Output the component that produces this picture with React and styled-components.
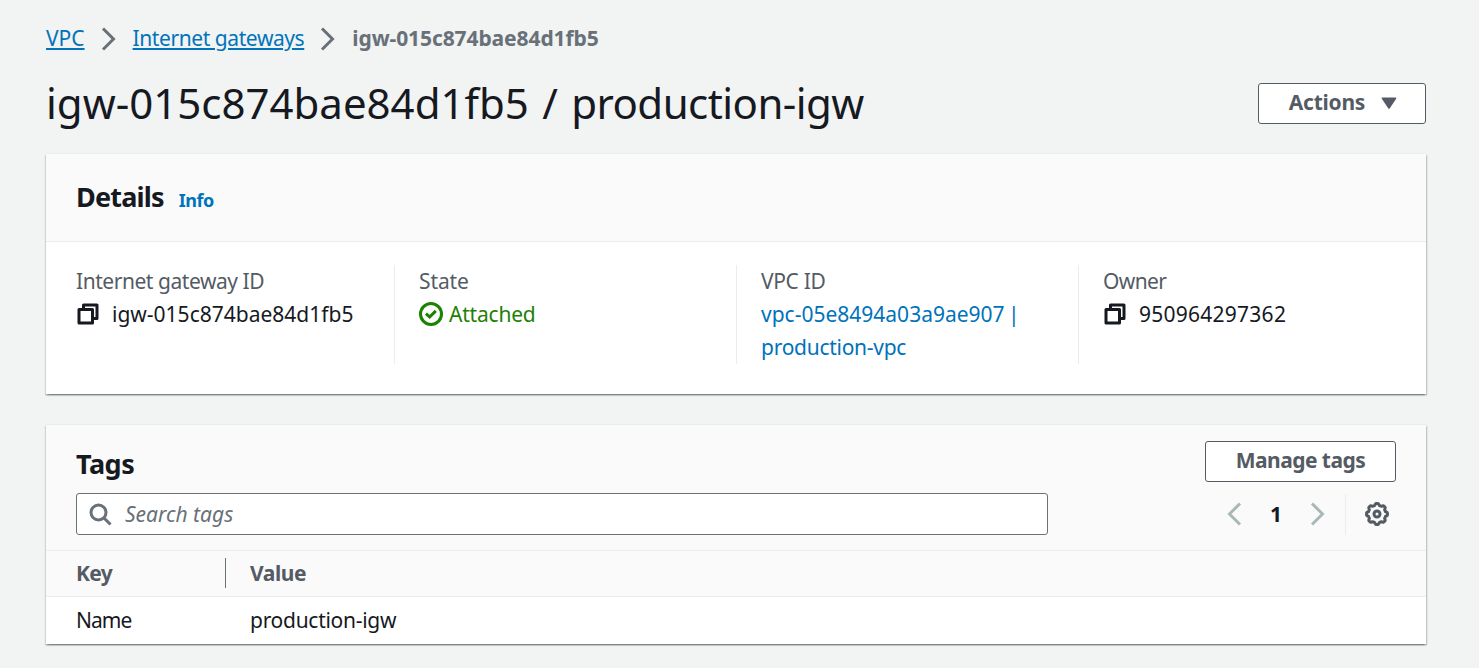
import React from "react";
import styled, { createGlobalStyle } from "styled-components";

const GlobalStyle = createGlobalStyle`
  * { box-sizing: border-box; }
  body {
    margin: 0;
    background: #f2f3f3;
    color: #16191f;
    font-family: "Noto Sans", "Open Sans", sans-serif;
    font-size: 21px;
    line-height: 33px;
  }
`;

const Page = styled.main`
  min-height: 668px;
  padding: 22px 53px 23px 46px;
`;

const Breadcrumbs = styled.nav`
  display: flex;
  align-items: center;
  height: 33px;
`;

const Crumb = styled.a`
  color: #0073bb;
  text-decoration: underline;
  text-decoration-thickness: 2px;
  text-underline-offset: 2px;
  letter-spacing: ${(p) => p.$track || 0}px;
  white-space: nowrap;
`;

const CurrentCrumb = styled.span`
  color: #687078;
  font-weight: 700;
  white-space: nowrap;
  letter-spacing: -0.09px;
`;

const CrumbSeparator = styled.span`
  display: flex;
  margin: 0 12px;
`;

const TitleRow = styled.header`
  display: flex;
  align-items: center;
  justify-content: space-between;
  height: 41px;
  margin: 28px 0 29px;
`;

const PageTitle = styled.h1`
  margin: 0 0 2px;
  font-size: 42px;
  font-weight: 400;
  line-height: 41px;
  word-spacing: 2.5px;
  white-space: nowrap;
`;

const ResourceName = styled.span`
  letter-spacing: -0.55px;
`;

const Button = styled.button`
  display: flex;
  align-items: center;
  justify-content: center;
  gap: 16px;
  width: ${(p) => p.$width}px;
  height: 41px;
  padding: 0 0 2px ${(p) => p.$shift || 0}px;
  border: 1px solid #545b64;
  border-radius: 3px;
  background: #fff;
  color: #545b64;
  font: 700 21px/33px "Noto Sans", "Open Sans", sans-serif;
  letter-spacing: ${(p) => p.$track || 0}px;
`;

const Panel = styled.section`
  background: #fff;
  border-top: 1px solid #eaeded;
  box-shadow:
    0 1.5px 1.5px 0 rgba(0, 28, 36, 0.3),
    1.5px 1.5px 1.5px 0 rgba(0, 28, 36, 0.15),
    -1.5px 1.5px 1.5px 0 rgba(0, 28, 36, 0.15);
  & + & { margin-top: 30px; }
`;

const DetailsHeader = styled.div`
  display: flex;
  align-items: baseline;
  gap: 15px;
  height: 88px;
  padding: 26px 30px 0;
  background: #fafafa;
  border-bottom: 1px solid #eaeded;
`;

const PanelTitle = styled.h2`
  margin: 0;
  font-size: 27px;
  font-weight: 700;
  line-height: 33px;
  letter-spacing: -0.8px;
`;

const InfoLink = styled.a`
  color: #0073bb;
  font-size: 18px;
  font-weight: 700;
  letter-spacing: -0.5px;
`;

const DetailsGrid = styled.div`
  display: grid;
  grid-template-columns: 318px 342px 342px 1fr;
  padding: 23px 30px 30px;
`;

const Field = styled.div`
  min-height: 99px;
  border-left: ${(p) => (p.$first ? "none" : "1px solid #eaeded")};
  padding-left: ${(p) => (p.$first ? 0 : 24)}px;
`;

const FieldLabel = styled.div`
  color: #545b64;
  letter-spacing: ${(p) => p.$track || 0}px;
`;

const FieldValue = styled.div`
  display: flex;
  align-items: center;
  gap: ${(p) => p.$gap || 0}px;
  color: ${(p) => p.$color || "#16191f"};
  letter-spacing: ${(p) => p.$track || 0}px;
  svg { margin-bottom: 2px; }
`;

const VpcLink = styled.a`
  display: block;
  color: #0073bb;
  letter-spacing: ${(p) => p.$track || 0}px;
  word-spacing: -2px;
`;

const TagsHeader = styled.div`
  height: 125px;
  padding: 16px 30px 0;
  background: #fafafa;
`;

const TagsTop = styled.div`
  display: flex;
  justify-content: space-between;
  align-items: center;
  height: 41px;
  margin-bottom: 11px;
  ${PanelTitle} { padding-top: 4px; letter-spacing: -0.5px; }
`;

const TagsTools = styled.div`
  display: flex;
  align-items: center;
  height: 42px;
`;

const SearchBox = styled.label`
  display: flex;
  align-items: center;
  gap: 13px;
  width: 972px;
  height: 42px;
  padding-left: 11px;
  border: 1px solid #687078;
  border-radius: 3px;
  background: #fff;
  color: #687078;
  font-style: italic;
`;

const Pager = styled.div`
  display: flex;
  align-items: center;
  gap: 18px;
  margin-left: auto;
  margin-right: 15px;
`;

const PageNumber = styled.span`
  width: 24px;
  text-align: center;
  font-weight: 700;
`;

const Settings = styled.div`
  display: flex;
  align-items: center;
  height: 41px;
  padding: 0 7px 0 19px;
  border-left: 1px solid #eaeded;
`;

const TagRow = styled.div`
  display: grid;
  grid-template-columns: 150px 1fr;
  align-items: center;
  height: 47px;
  padding: 0 30px 1px;
`;

const TagHeadRow = styled(TagRow)`
  background: #fafafa;
  border-top: 1px solid #eaeded;
  border-bottom: 1px solid #eaeded;
  color: #545b64;
  font-weight: 700;
`;

const KeyHead = styled.span`
  height: 30px;
  line-height: 30px;
  border-right: 1px solid #687078;
  letter-spacing: -0.6px;
`;

const Cell = styled.span`
  padding-left: ${(p) => p.$indent || 0}px;
  letter-spacing: ${(p) => p.$track || 0}px;
`;

const Icon = styled.svg.attrs({ viewBox: "0 0 16 16", width: 24, height: 24, fill: "none" })`
  display: block;
  flex: none;
  stroke: ${(p) => p.$color};
  stroke-width: 2;
`;

const Chevron = ({ color, left }) => (
  <Icon $color={color}>
    <path d={left ? "M12 1 5 8l7 7" : "M4 1l7 7-7 7"} />
  </Icon>
);

const CopyIcon = () => (
  <Icon $color="#16191f" strokeLinejoin="round">
    <path d="M2 5h9v9H2z" />
    <path d="M5 5V2h9v9h-3" />
  </Icon>
);

const CheckIcon = () => (
  <Icon $color="#1d8102">
    <circle cx="8" cy="8" r="7" />
    <path d="m4.6 7.8 2.5 2.2 4.1-4.1" />
  </Icon>
);

const SearchIcon = () => (
  <Icon $color="#687078">
    <circle cx="7" cy="7" r="5" />
    <path d="m10.5 10.5 4.5 4.5" />
  </Icon>
);

const gearPath = (() => {
  const points = [];
  for (let i = 0; i <= 96; i += 1) {
    const a = (i / 96) * Math.PI * 2;
    const r = 6.4 + 0.6 * Math.tanh(2.5 * Math.cos(8 * a));
    points.push(`${(8 + r * Math.sin(a)).toFixed(2)} ${(8 - r * Math.cos(a)).toFixed(2)}`);
  }
  return `M${points.join("L")}Z`;
})();

const GearIcon = () => (
  <Icon $color="#545b64" strokeLinejoin="round">
    <path d={gearPath} />
    <circle cx="8" cy="8" r="2" />
  </Icon>
);

const CaretIcon = () => (
  <svg width="16" height="13" viewBox="0 0 16 13">
    <path d="M1.5 2.2h13L8 12z" fill="#545b64" stroke="#545b64" strokeWidth="1.6" strokeLinejoin="round" />
  </svg>
);

export default function App() {
  return (
    <Page>
      <GlobalStyle />
      <Breadcrumbs>
        <Crumb>VPC</Crumb>
        <CrumbSeparator><Chevron color="#687078" /></CrumbSeparator>
        <Crumb $track={-0.42}>Internet gateways</Crumb>
        <CrumbSeparator><Chevron color="#687078" /></CrumbSeparator>
        <CurrentCrumb>igw-015c874bae84d1fb5</CurrentCrumb>
      </Breadcrumbs>
      <TitleRow>
        <PageTitle>igw-015c874bae84d1fb5 / <ResourceName>production-igw</ResourceName></PageTitle>
        <Button $width={168} $shift={2} $track={-0.25}>Actions <CaretIcon /></Button>
      </TitleRow>
      <Panel>
        <DetailsHeader>
          <PanelTitle>Details</PanelTitle>
          <InfoLink>Info</InfoLink>
        </DetailsHeader>
        <DetailsGrid>
          <Field $first>
            <FieldLabel $track={-0.45}>Internet gateway ID</FieldLabel>
            <FieldValue $gap={12}><CopyIcon />igw-015c874bae84d1fb5</FieldValue>
          </Field>
          <Field>
            <FieldLabel $track={-0.1}>State</FieldLabel>
            <FieldValue $gap={6} $track={-0.2} $color="#1d8102"><CheckIcon />Attached</FieldValue>
          </Field>
          <Field>
            <FieldLabel $track={-0.35}>VPC ID</FieldLabel>
            <VpcLink>vpc-05e8494a03a9ae907 |</VpcLink>
            <VpcLink $track={-0.27}>production-vpc</VpcLink>
          </Field>
          <Field>
            <FieldLabel $track={-0.6}>Owner</FieldLabel>
            <FieldValue $gap={12} $track={0.25}><CopyIcon />950964297362</FieldValue>
          </Field>
        </DetailsGrid>
      </Panel>
      <Panel>
        <TagsHeader>
          <TagsTop>
            <PanelTitle>Tags</PanelTitle>
            <Button $width={191} $track={-0.55}>Manage tags</Button>
          </TagsTop>
          <TagsTools>
            <SearchBox><SearchIcon />Search tags</SearchBox>
            <Pager>
              <Chevron color="#aab7b8" left />
              <PageNumber>1</PageNumber>
              <Chevron color="#aab7b8" />
            </Pager>
            <Settings><GearIcon /></Settings>
          </TagsTools>
        </TagsHeader>
        <TagHeadRow>
          <KeyHead>Key</KeyHead>
          <Cell $indent={24} $track={-0.45}>Value</Cell>
        </TagHeadRow>
        <TagRow>
          <Cell $track={-1}>Name</Cell>
          <Cell $indent={24} $track={-0.28}>production-igw</Cell>
        </TagRow>
      </Panel>
    </Page>
  );
}
